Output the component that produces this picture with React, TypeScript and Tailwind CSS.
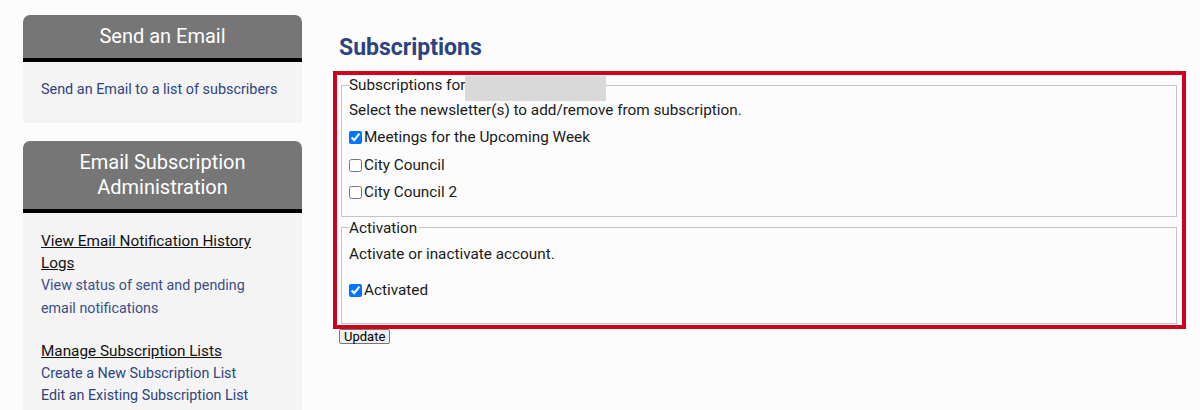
import React from 'react';

const font = { fontFamily: 'Roboto, "Noto Sans", Arial, sans-serif' };

function PanelHeader({ children, className = '' }: { children: React.ReactNode; className?: string }) {
  return (
    <div
      className={`rounded-t-[7px] border-b-4 border-black bg-[#767676] text-center text-[20px] leading-[25px] text-white ${className}`}
    >
      {children}
    </div>
  );
}

function CheckRow({ label, checked = false }: { label: string; checked?: boolean }) {
  return (
    <label className="flex h-[27.5px] items-center">
      <input type="checkbox" defaultChecked={checked} className="m-0 mr-[2px] h-[13px] w-[13px]" />
      <span>{label}</span>
    </label>
  );
}

export default function App() {
  return (
    <div className="flex min-h-[410px] bg-[#fcfcfc] pl-[23px] text-[#222]" style={font}>
      {/* Sidebar */}
      <aside className="flex w-[279px] shrink-0 flex-col pt-[15px]">
        <div>
          <PanelHeader className="flex h-[47px] items-center justify-center">Send an Email</PanelHeader>
          <div className="bg-[#f4f4f4] px-[18px] pb-[22px] pt-[17px] text-[14.4px] leading-[22px] text-[#2e4480]">
            Send an Email to a list of subscribers
          </div>
        </div>

        <div className="mt-[18px]">
          <PanelHeader className="pb-[9px] pt-[9px]">
            Email Subscription
            <br />
            Administration
          </PanelHeader>
          <div className="min-h-[200px] bg-[#f4f4f4] pl-[18px] pr-[40px] pt-[17px] leading-[22.2px]">
            <div className="text-[15.3px] text-[#111] underline">View Email Notification History Logs</div>
            <div className="text-[14.3px] text-[#3a4f86]">View status of sent and pending email notifications</div>
            <div className="mt-[21px] text-[15.3px] text-[#111] underline">Manage Subscription Lists</div>
            <div className="text-[14.3px] text-[#2e4480]">Create a New Subscription List</div>
            <div className="text-[14.3px] text-[#2e4480]">Edit an Existing Subscription List</div>
          </div>
        </div>
      </aside>

      {/* Main content */}
      <main className="ml-[31px] w-[853px] pt-[34px]">
        <h1 className="pl-[6px] text-[23px] font-bold leading-[27px] text-[#2b4381]">Subscriptions</h1>

        <div className="mt-[10px] border-4 border-[#d0021b] pb-[1px] pl-[4px] pr-[5px] pt-[1px] text-[15.3px] text-[#1a1a1a]">
          <fieldset className="border border-[#c4c4c4] px-[7px] pb-[9px]">
            <legend className="relative pr-[2px] leading-[18px]">
              Subscriptions for
              <span className="absolute left-[116px] top-0 h-[25px] w-[141px] bg-[#d9d9d9]" />
            </legend>
            <div className="mt-[5px] leading-[22px]">Select the newsletter(s) to add/remove from subscription.</div>
            <div className="mt-[3px] flex flex-col">
              <CheckRow label="Meetings for the Upcoming Week" checked />
              <CheckRow label="City Council" />
              <CheckRow label="City Council 2" />
            </div>
          </fieldset>

          <fieldset className="mt-[2px] border border-[#c4c4c4] px-[7px] pb-[19px]">
            <legend className="pr-[2px] leading-[18px]">Activation</legend>
            <div className="mt-[6px] leading-[22px]">Activate or inactivate account.</div>
            <div className="mt-[12px]">
              <CheckRow label="Activated" checked />
            </div>
          </fieldset>
        </div>

        <div className="flex pl-[6px]">
          <button className="h-[15px] rounded-[2px] border border-[#767676] bg-[#efefef] px-[4px] text-[13px] leading-[13px] text-black">
            Update
          </button>
        </div>
      </main>
    </div>
  );
}
